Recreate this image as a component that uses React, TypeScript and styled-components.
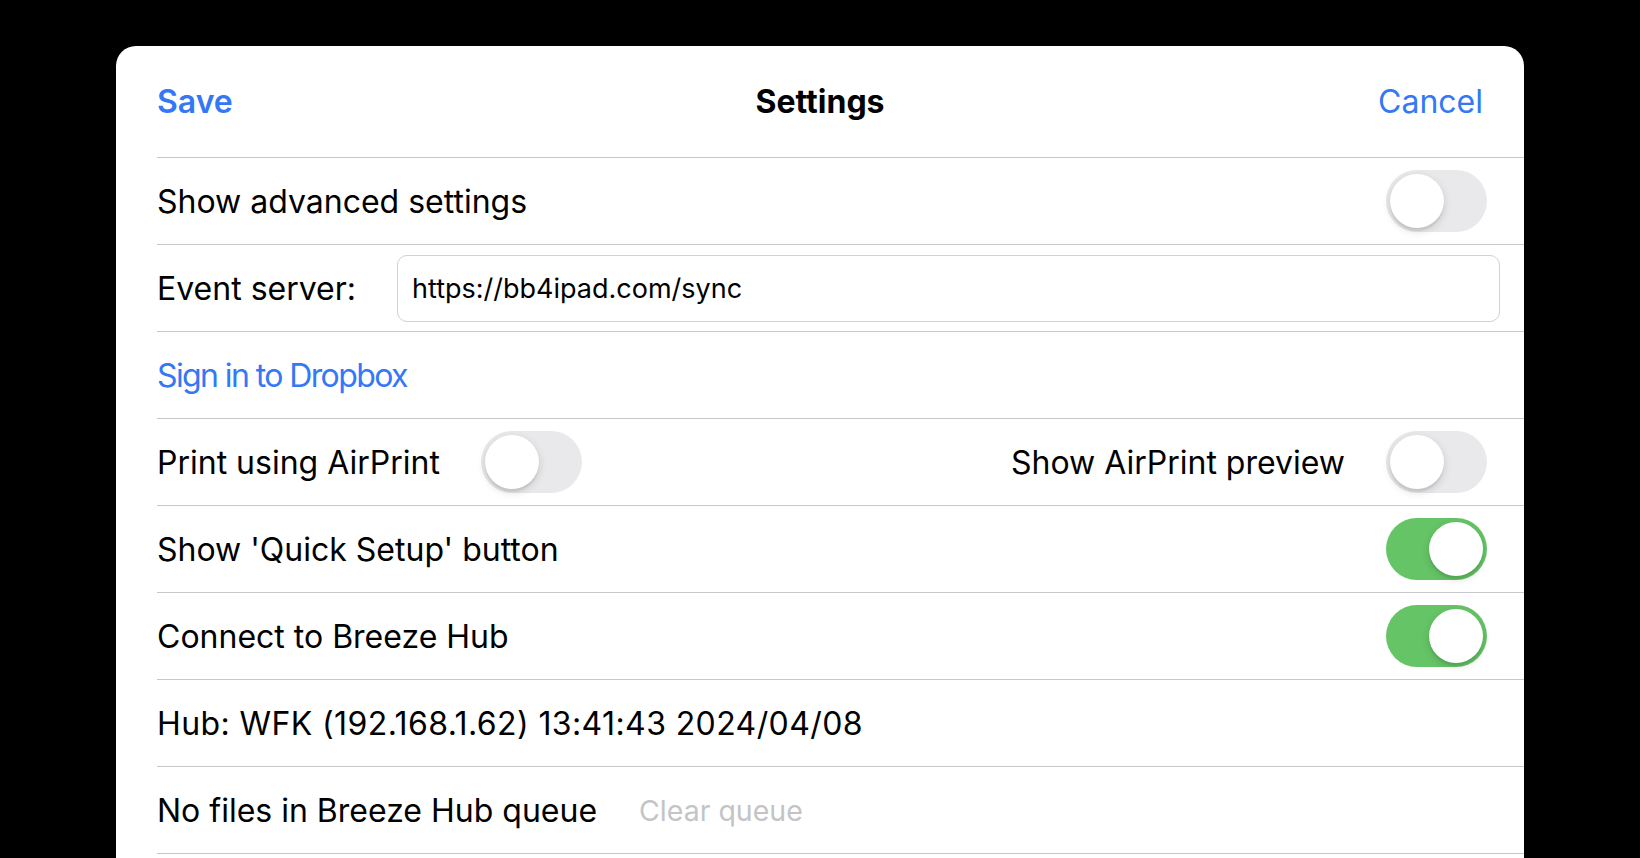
import styled, { createGlobalStyle } from 'styled-components';

const GlobalStyle = createGlobalStyle`
  html, body {
    margin: 0;
    padding: 0;
    background: #000000;
    height: 858px;
    overflow: hidden;
  }
  body {
    font-family: Inter, 'Noto Sans', sans-serif;
    -webkit-font-smoothing: antialiased;
  }
`;

const Sheet = styled.div`
  box-sizing: border-box;
  width: 1408px;
  height: 812px;
  margin: 46px 0 0 116px;
  padding-left: 41px;
  background: #ffffff;
  border-radius: 20px 20px 0 0;
  color: #000000;
`;

const Header = styled.div`
  display: grid;
  grid-template-columns: 1fr auto 1fr;
  align-items: center;
  height: 111px;
  padding-right: 41px;
  border-bottom: 1px solid #c8c7cc;
  font-size: 32px;
`;

const NavButton = styled.span<{ $bold?: boolean; $align?: 'left' | 'right' }>`
  color: #3478f6;
  font-weight: ${(p) => (p.$bold ? 600 : 400)};
  justify-self: ${(p) => (p.$align === 'right' ? 'end' : 'start')};
`;

const Title = styled.span`
  font-weight: 700;
`;

const Row = styled.div`
  box-sizing: border-box;
  display: flex;
  align-items: center;
  height: 87px;
  padding-right: 24px;
  border-bottom: 1px solid #c8c7cc;
  font-size: 32px;
`;

// SF digits run wider than Inter's, links a bit narrower: tracking evens it out
const Label = styled.span<{ $link?: boolean; $tracking?: string }>`
  color: ${(p) => (p.$link ? '#3478f6' : '#000000')};
  letter-spacing: ${(p) => p.$tracking ?? (p.$link ? '-1.6px' : 'normal')};
  white-space: nowrap;
`;

const Spacer = styled.div`
  flex: 1;
`;

const Group = styled.div`
  display: flex;
  align-items: center;
  gap: 41px;
`;

const Input = styled.div`
  box-sizing: border-box;
  flex: 1;
  height: 67px;
  margin-left: 41px;
  padding: 0 14px;
  display: flex;
  align-items: center;
  border: 1px solid #d1d1d6;
  border-radius: 10px;
  font-size: 27px;
`;

const ClearQueue = styled.span`
  margin-left: 42px;
  font-size: 28.5px;
  color: #c4c4c7;
`;

const Track = styled.div<{ $on: boolean }>`
  position: relative;
  flex: none;
  width: 101px;
  height: 62px;
  margin-right: 13px;
  border-radius: 31px;
  background: ${(p) => (p.$on ? '#65c466' : '#e9e9eb')};
`;

const Knob = styled.div<{ $on: boolean }>`
  position: absolute;
  top: 4px;
  left: ${(p) => (p.$on ? '43px' : '4px')};
  width: 54px;
  height: 54px;
  border-radius: 50%;
  background: #ffffff;
  box-shadow: 0 3px 8px rgba(0, 0, 0, 0.15), 0 3px 1px rgba(0, 0, 0, 0.06);
`;

const Toggle = ({ on = false }: { on?: boolean }) => (
  <Track $on={on}>
    <Knob $on={on} />
  </Track>
);

export default function App() {
  return (
    <>
      <GlobalStyle />
      <Sheet>
        <Header>
          <NavButton $bold>Save</NavButton>
          <Title>Settings</Title>
          <NavButton $align="right">Cancel</NavButton>
        </Header>
        <Row>
          <Label>Show advanced settings</Label>
          <Spacer />
          <Toggle />
        </Row>
        <Row>
          <Label>Event server:</Label>
          <Input>https://bb4ipad.com/sync</Input>
        </Row>
        <Row>
          <Label $link>Sign in to Dropbox</Label>
        </Row>
        <Row>
          <Group>
            <Label>Print using AirPrint</Label>
            <Toggle />
          </Group>
          <Spacer />
          <Group>
            <Label>Show AirPrint preview</Label>
            <Toggle />
          </Group>
        </Row>
        <Row>
          <Label>Show 'Quick Setup' button</Label>
          <Spacer />
          <Toggle on />
        </Row>
        <Row>
          <Label>Connect to Breeze Hub</Label>
          <Spacer />
          <Toggle on />
        </Row>
        <Row>
          <Label $tracking="0.4px">Hub: WFK (192.168.1.62) 13:41:43 2024/04/08</Label>
        </Row>
        <Row>
          <Label>No files in Breeze Hub queue</Label>
          <ClearQueue>Clear queue</ClearQueue>
        </Row>
      </Sheet>
    </>
  );
}
